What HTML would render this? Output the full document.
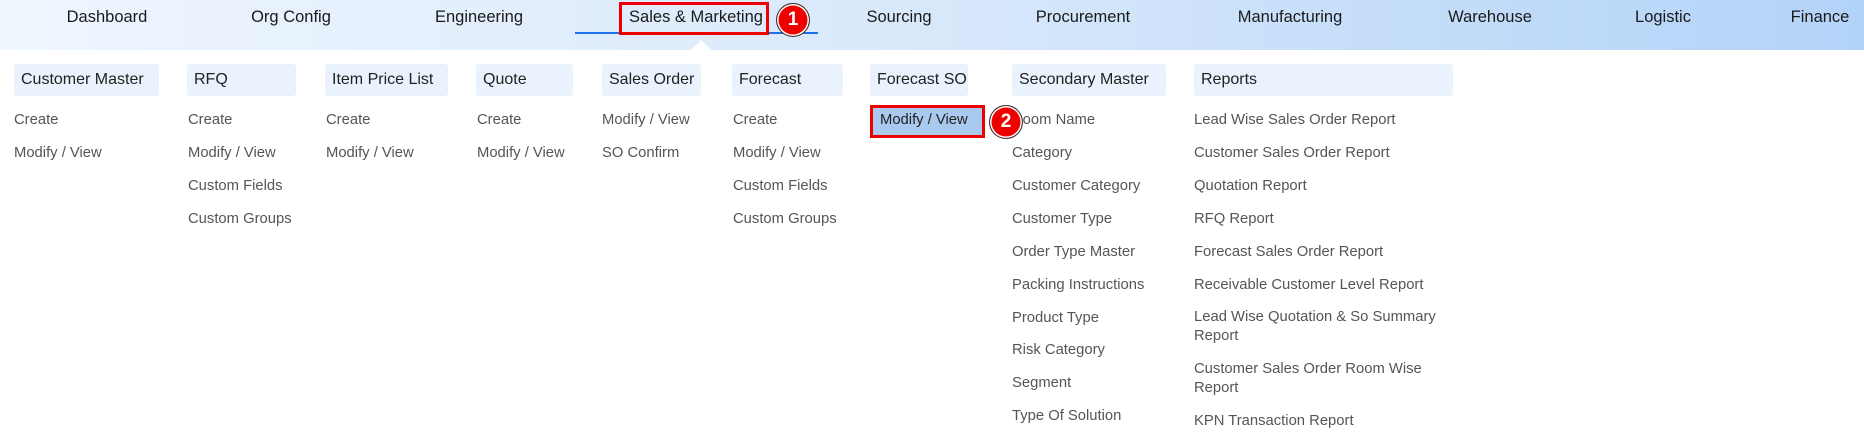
<!DOCTYPE html>
<html><head><meta charset="utf-8"><style>
body{margin:0;width:1864px;height:437px;background:#fff;font-family:"Liberation Sans",sans-serif;position:relative;overflow:hidden}
.top{position:absolute;left:0;top:0;width:1864px;height:50px;background:linear-gradient(90deg,#eff6fe,#d8e8fb 50%,#b2d3f8)}
.n{position:absolute;top:8px;font-size:16.5px;color:#1a1a1a;transform:translateX(-50%);white-space:nowrap}
.h{position:absolute;top:64px;height:32px;background:#eaf3fd;border-radius:3px;font-size:16px;color:#222;line-height:32px;padding-left:7px;box-sizing:border-box;white-space:nowrap}
.i{position:absolute;font-size:14.8px;color:#555;white-space:nowrap;line-height:19px}
.c{position:absolute;width:34px;height:34px;border-radius:50%;background:#e00;border:1.5px solid #333;box-sizing:border-box;color:#fff;font-weight:bold;font-size:19px;text-align:center;line-height:31px;box-shadow:0 0 0 1.5px #fff inset}
</style></head><body>
<div class="top"></div>
<div class="n" style="left:107px">Dashboard</div>
<div class="n" style="left:291px">Org Config</div>
<div class="n" style="left:479px">Engineering</div>
<div class="n" style="left:696px">Sales &amp; Marketing</div>
<div class="n" style="left:899px">Sourcing</div>
<div class="n" style="left:1083px">Procurement</div>
<div class="n" style="left:1290px">Manufacturing</div>
<div class="n" style="left:1490px">Warehouse</div>
<div class="n" style="left:1663px">Logistic</div>
<div class="n" style="left:1820px">Finance</div>
<div style="position:absolute;left:575px;top:32px;width:243px;height:2px;background:#1a73e8"></div>
<div style="position:absolute;left:619px;top:2px;width:150px;height:33px;border:3px solid #e00;box-sizing:border-box"></div>
<div class="c" style="left:776px;top:3px">1</div>
<div style="position:absolute;left:691px;top:40px;width:0;height:0;border-left:10px solid transparent;border-right:10px solid transparent;border-bottom:10px solid #fff"></div>

<div class="h" style="left:14px;width:145px">Customer Master</div>
<div class="h" style="left:187px;width:109px">RFQ</div>
<div class="h" style="left:325px;width:123px">Item Price List</div>
<div class="h" style="left:476px;width:97px">Quote</div>
<div class="h" style="left:602px;width:99px">Sales Order</div>
<div class="h" style="left:732px;width:111px">Forecast</div>
<div class="h" style="left:870px;width:98px">Forecast SO</div>
<div class="h" style="left:1012px;width:154px">Secondary Master</div>
<div class="h" style="left:1194px;width:259px">Reports</div>

<div class="i" style="left:14px;top:111px">Create</div>
<div class="i" style="left:14px;top:144px">Modify / View</div>
<div class="i" style="left:188px;top:111px">Create</div>
<div class="i" style="left:188px;top:144px">Modify / View</div>
<div class="i" style="left:188px;top:177px">Custom Fields</div>
<div class="i" style="left:188px;top:210px">Custom Groups</div>
<div class="i" style="left:326px;top:111px">Create</div>
<div class="i" style="left:326px;top:144px">Modify / View</div>
<div class="i" style="left:477px;top:111px">Create</div>
<div class="i" style="left:477px;top:144px">Modify / View</div>
<div class="i" style="left:602px;top:111px">Modify / View</div>
<div class="i" style="left:602px;top:144px">SO Confirm</div>
<div class="i" style="left:733px;top:111px">Create</div>
<div class="i" style="left:733px;top:144px">Modify / View</div>
<div class="i" style="left:733px;top:177px">Custom Fields</div>
<div class="i" style="left:733px;top:210px">Custom Groups</div>
<div style="position:absolute;left:870px;top:105px;width:115px;height:33px;background:#a9c9ee;border:3px solid #e00;box-sizing:border-box"></div>
<div class="i" style="left:880px;top:111px;color:#222">Modify / View</div>
<div class="i" style="left:1012px;top:111px">Room Name</div>
<div class="c" style="left:989px;top:105px">2</div>
<div class="i" style="left:1012px;top:144px">Category</div>
<div class="i" style="left:1012px;top:177px">Customer Category</div>
<div class="i" style="left:1012px;top:210px">Customer Type</div>
<div class="i" style="left:1012px;top:243px">Order Type Master</div>
<div class="i" style="left:1012px;top:276px">Packing Instructions</div>
<div class="i" style="left:1012px;top:309px">Product Type</div>
<div class="i" style="left:1012px;top:341px">Risk Category</div>
<div class="i" style="left:1012px;top:374px">Segment</div>
<div class="i" style="left:1012px;top:407px">Type Of Solution</div>
<div class="i" style="left:1194px;top:111px">Lead Wise Sales Order Report</div>
<div class="i" style="left:1194px;top:144px">Customer Sales Order Report</div>
<div class="i" style="left:1194px;top:177px">Quotation Report</div>
<div class="i" style="left:1194px;top:210px">RFQ Report</div>
<div class="i" style="left:1194px;top:243px">Forecast Sales Order Report</div>
<div class="i" style="left:1194px;top:276px">Receivable Customer Level Report</div>
<div class="i" style="left:1194px;top:308px">Lead Wise Quotation &amp; So Summary<br>Report</div>
<div class="i" style="left:1194px;top:360px">Customer Sales Order Room Wise<br>Report</div>
<div class="i" style="left:1194px;top:412px">KPN Transaction Report</div>
</body></html>
